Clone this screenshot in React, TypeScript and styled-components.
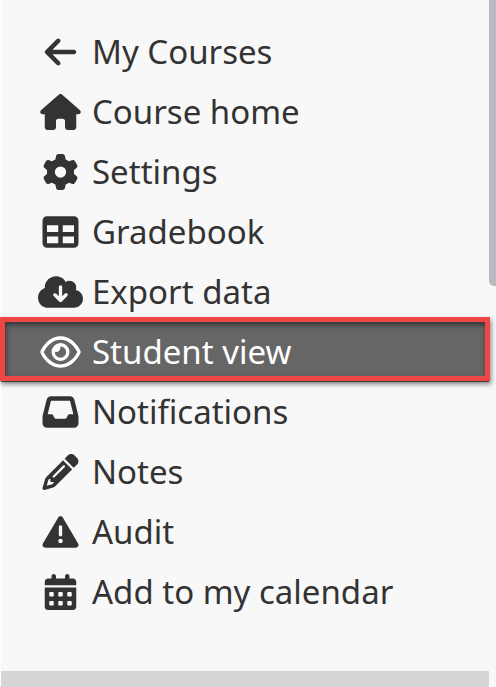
import React from "react";
import styled, { createGlobalStyle } from "styled-components";
import type { IconType } from "react-icons";
import {
  FaArrowLeft,
  FaHouse,
  FaGear,
  FaTable,
  FaCloudArrowDown,
  FaRegEye,
  FaInbox,
  FaPencil,
  FaTriangleExclamation,
  FaCalendarDays,
} from "react-icons/fa6";

const GlobalStyle = createGlobalStyle`
  *, *::before, *::after { box-sizing: border-box; }
  body {
    margin: 0;
    background: #ffffff;
    font-family: "Noto Sans", "Open Sans", sans-serif;
  }
`;

const Page = styled.div`
  display: flex;
  min-height: 100vh;
  padding-left: 1px;
  overflow: hidden;
`;

const Sidebar = styled.nav`
  flex: 1;
  display: flex;
  flex-direction: column;
  min-width: 0;
  background: #f8f8f8;
`;

const Menu = styled.ul`
  flex: 1;
  list-style: none;
  margin: 0;
  padding: 22px 0 48px;
`;

const Item = styled.li`
  position: relative;
`;

const ItemLink = styled.a<{ $active?: boolean }>`
  display: flex;
  align-items: center;
  gap: 9px;
  height: 60px;
  padding-left: 37px;
  color: ${(p) => (p.$active ? "#ffffff" : "#333333")};
  background: ${(p) => (p.$active ? "#666666" : "transparent")};
  font-size: 33px;
  line-height: 60px;
  white-space: nowrap;
  text-decoration: none;

  svg {
    flex: none;
    width: 45px;
    height: 36px;
  }
`;

const Highlight = styled.span`
  position: absolute;
  inset: -5px -1px 1px -1px;
  border: 5px solid #ef4743;
  box-shadow: 1px 3px 5px rgba(0, 0, 0, 0.5), inset 1px 3px 5px rgba(0, 0, 0, 0.5);
  pointer-events: none;
`;

const NextSection = styled.div`
  height: 16px;
  background: #d6d6d6;
`;

const ScrollTrack = styled.div`
  flex: none;
  width: 7px;
  background: #f8f8f8;
`;

const ScrollThumb = styled.div`
  height: 286px;
  background: #b8b8be;
  border-bottom-left-radius: 5px;
`;

const items: { label: string; icon: IconType; active?: boolean }[] = [
  { label: "My Courses", icon: FaArrowLeft },
  { label: "Course home", icon: FaHouse },
  { label: "Settings", icon: FaGear },
  { label: "Gradebook", icon: FaTable },
  { label: "Export data", icon: FaCloudArrowDown },
  { label: "Student view", icon: FaRegEye, active: true },
  { label: "Notifications", icon: FaInbox },
  { label: "Notes", icon: FaPencil },
  { label: "Audit", icon: FaTriangleExclamation },
  { label: "Add to my calendar", icon: FaCalendarDays },
];

export default function App() {
  return (
    <>
      <GlobalStyle />
      <Page>
        <Sidebar>
          <Menu>
            {items.map(({ label, icon: Icon, active }) => (
              <Item key={label}>
                <ItemLink href="#" $active={active} aria-current={active ? "page" : undefined}>
                  <Icon aria-hidden="true" />
                  {label}
                </ItemLink>
                {active && <Highlight />}
              </Item>
            ))}
          </Menu>
          <NextSection />
        </Sidebar>
        <ScrollTrack>
          <ScrollThumb />
        </ScrollTrack>
      </Page>
    </>
  );
}
